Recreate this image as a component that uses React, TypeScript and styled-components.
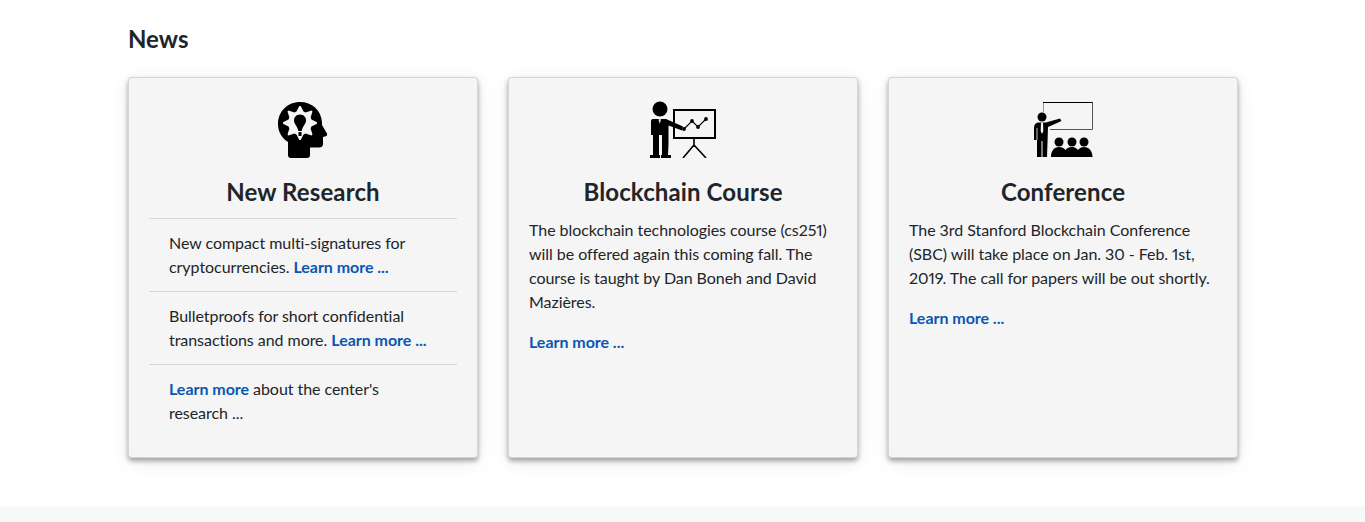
import { createGlobalStyle, styled } from "styled-components";
import type { ReactNode } from "react";

const GlobalStyle = createGlobalStyle`
  * {
    box-sizing: border-box;
  }
  body {
    margin: 0;
    background: #fff;
    color: #212529;
    font-family: Lato, "Liberation Sans", sans-serif;
    font-size: 16px;
    line-height: 24px;
    letter-spacing: -0.05px;
    font-variant-numeric: proportional-nums;
  }
`;

const Section = styled.section`
  width: 1110px;
  margin: 0 auto 0 128px;
  padding: 24px 0 48px;
`;

const Heading = styled.h2`
  margin: 0 0 23px;
  font-size: 24px;
  line-height: 30px;
  font-weight: 700;
  letter-spacing: 0;
  color: #212529;
`;

const CardRow = styled.div`
  display: grid;
  grid-template-columns: repeat(3, 350px);
  gap: 30px;
`;

const Card = styled.article`
  display: flex;
  flex-direction: column;
  padding: 20px;
  background: #f5f5f5;
  border: 1px solid rgba(0, 0, 0, 0.125);
  border-radius: 4px;
  box-shadow: 0 3px 5px rgba(0, 0, 0, 0.35), 0 4px 20px rgba(0, 0, 0, 0.08);
`;

const IconBox = styled.div`
  display: flex;
  justify-content: center;
  height: 79px;
`;

const CardTitle = styled.h3`
  margin: 0 0 11px;
  height: 30px;
  font-size: 24px;
  line-height: 30px;
  font-weight: 700;
  letter-spacing: 0.12px;
  text-align: center;
  color: #212529;
`;

const Para = styled.p`
  margin: 0 0 16px;
`;

const List = styled.ul`
  margin: 0;
  padding: 0;
  list-style: none;
`;

const Item = styled.li`
  padding: 12px 20px;
  border-top: 1px solid rgba(0, 0, 0, 0.125);
`;

const More = styled.a`
  color: #0b57b0;
  font-weight: 700;
  letter-spacing: -0.03px;
  text-decoration: none;
`;

const Footer = styled.footer`
  height: 16px;
  background: #f8f9fa;
`;

function Icon({ children, width }: { children: ReactNode; width: number }) {
  return (
    <svg width={width} height="60" viewBox={`0 0 ${width} 60`} fill="#000">
      {children}
    </svg>
  );
}

// eight-toothed gear outline around a centre point
function gearPoints(cx: number, cy: number, outer: number, inner: number) {
  const pts: string[] = [];
  for (let i = 0; i < 8; i++) {
    const a = (i * Math.PI) / 4 - Math.PI / 2;
    const steps: [number, number][] = [
      [-0.3, inner],
      [-0.04, outer],
      [0.04, outer],
      [0.3, inner],
    ];
    for (const [off, r] of steps) {
      pts.push(`${cx + r * Math.cos(a + off)},${cy + r * Math.sin(a + off)}`);
    }
  }
  return pts.join(" ");
}

function HeadIcon() {
  return (
    <Icon width={50}>
      <path d="M22 4C34 4 43 12 44 24L44 27L49 35.500C49.500 37 49 38 47 38.500L45 39V46C45 48.500 43.500 49.500 41 49.500H32V57C32 59 31 60 29 60H13C11 60 10 59 10 57V44C4 40 0 34 0 26C0 13 10 4 22 4Z" />
      <polygon fill="#f5f5f5" points={gearPoints(22, 25, 17, 12)} />
      <path d="M22 16.500C18 16.500 16 19.500 16 22.500C16 26 19.500 28 20.300 33H23.700C24.500 28 28 26 28 22.500C28 19.500 26 16.500 22 16.500Z" />
      <rect x="20.500" y="34" width="3" height="4" />
    </Icon>
  );
}

function TrainerIcon() {
  return (
    <Icon width={68}>
      <circle cx="11" cy="11" r="7.500" />
      <path d="M2 23Q2 21 4 21H17L34 28.500L33 32.500L19.500 27.500V46L19 57H13V37H10V57H4V37H2Z" />
      <path d="M1 57H11V60H1ZM12 57H22V60H12Z" />
      <path fill="#f5f5f5" d="M9.500 21.200H12L10.700 26Z" />
      <rect x="25" y="12" width="41" height="28" fill="none" stroke="#000" strokeWidth="2" />
      <path d="M35 31L43 23L49 29L57 21" fill="none" stroke="#000" strokeWidth="1.200" />
      <circle cx="35" cy="31" r="1.900" />
      <circle cx="43" cy="23" r="1.900" />
      <circle cx="49" cy="29" r="1.900" />
      <circle cx="57" cy="21" r="1.900" />
      <path d="M45 41V49M45 47L34 60M45 47L57 60" fill="none" stroke="#000" strokeWidth="1.600" />
    </Icon>
  );
}

function AudienceIcon() {
  return (
    <Icon width={60}>
      <path d="M10 4.500H59.500V31.500H17" fill="none" stroke="#444" strokeWidth="0.900" />
      <path d="M10.500 4.500V14" fill="none" stroke="#999" strokeWidth="1" />
      <path d="M10 4.500H59.500" fill="none" stroke="#000" strokeWidth="1" />
      <circle cx="9" cy="19" r="4.500" />
      <path d="M1 42V30Q1 24.500 6 24.500H13L27 20.500L28.500 23L15 29L14 59H9.500V43H8.500V59H4V42Z" />
      <path fill="#f5f5f5" d="M8 24.500H10L10.300 33L9 36L7.700 33Z" />
      <path d="M4 30V42" stroke="#f5f5f5" strokeWidth="0.800" />
      <circle cx="26" cy="44" r="4.500" />
      <circle cx="39" cy="44" r="4.500" />
      <circle cx="51" cy="44" r="4.500" />
      <path d="M18 59C18 53 21 49 26 49C29 49 31 50 32.500 52C34 50 36 49 39 49C41.500 49 43.500 50 45 52C46.500 50 48.500 49 51 49C56 49 59.500 53 59.500 59Z" />
    </Icon>
  );
}

export default function App() {
  return (
    <>
      <GlobalStyle />
      <Section>
        <Heading>News</Heading>
        <CardRow>
          <Card>
            <IconBox>
              <HeadIcon />
            </IconBox>
            <CardTitle>New Research</CardTitle>
            <List>
              <Item>
                New compact multi-signatures for cryptocurrencies.{" "}
                <More href="#">Learn more ...</More>
              </Item>
              <Item>
                Bulletproofs for short confidential transactions and more.{" "}
                <More href="#">Learn more ...</More>
              </Item>
              <Item>
                <More href="#">Learn more</More> about the center's research ...
              </Item>
            </List>
          </Card>
          <Card>
            <IconBox>
              <TrainerIcon />
            </IconBox>
            <CardTitle>Blockchain Course</CardTitle>
            <Para>
              The blockchain technologies course (cs251) will be offered again
              this coming fall. The course is taught by Dan Boneh and David
              Mazières.
            </Para>
            <More href="#">Learn more ...</More>
          </Card>
          <Card>
            <IconBox>
              <AudienceIcon />
            </IconBox>
            <CardTitle>Conference</CardTitle>
            <Para>
              The 3rd Stanford Blockchain Conference (SBC) will take place on
              Jan. 30 - Feb. 1st, 2019. The call for papers will be out shortly.
            </Para>
            <More href="#">Learn more ...</More>
          </Card>
        </CardRow>
      </Section>
      <Footer />
    </>
  );
}
